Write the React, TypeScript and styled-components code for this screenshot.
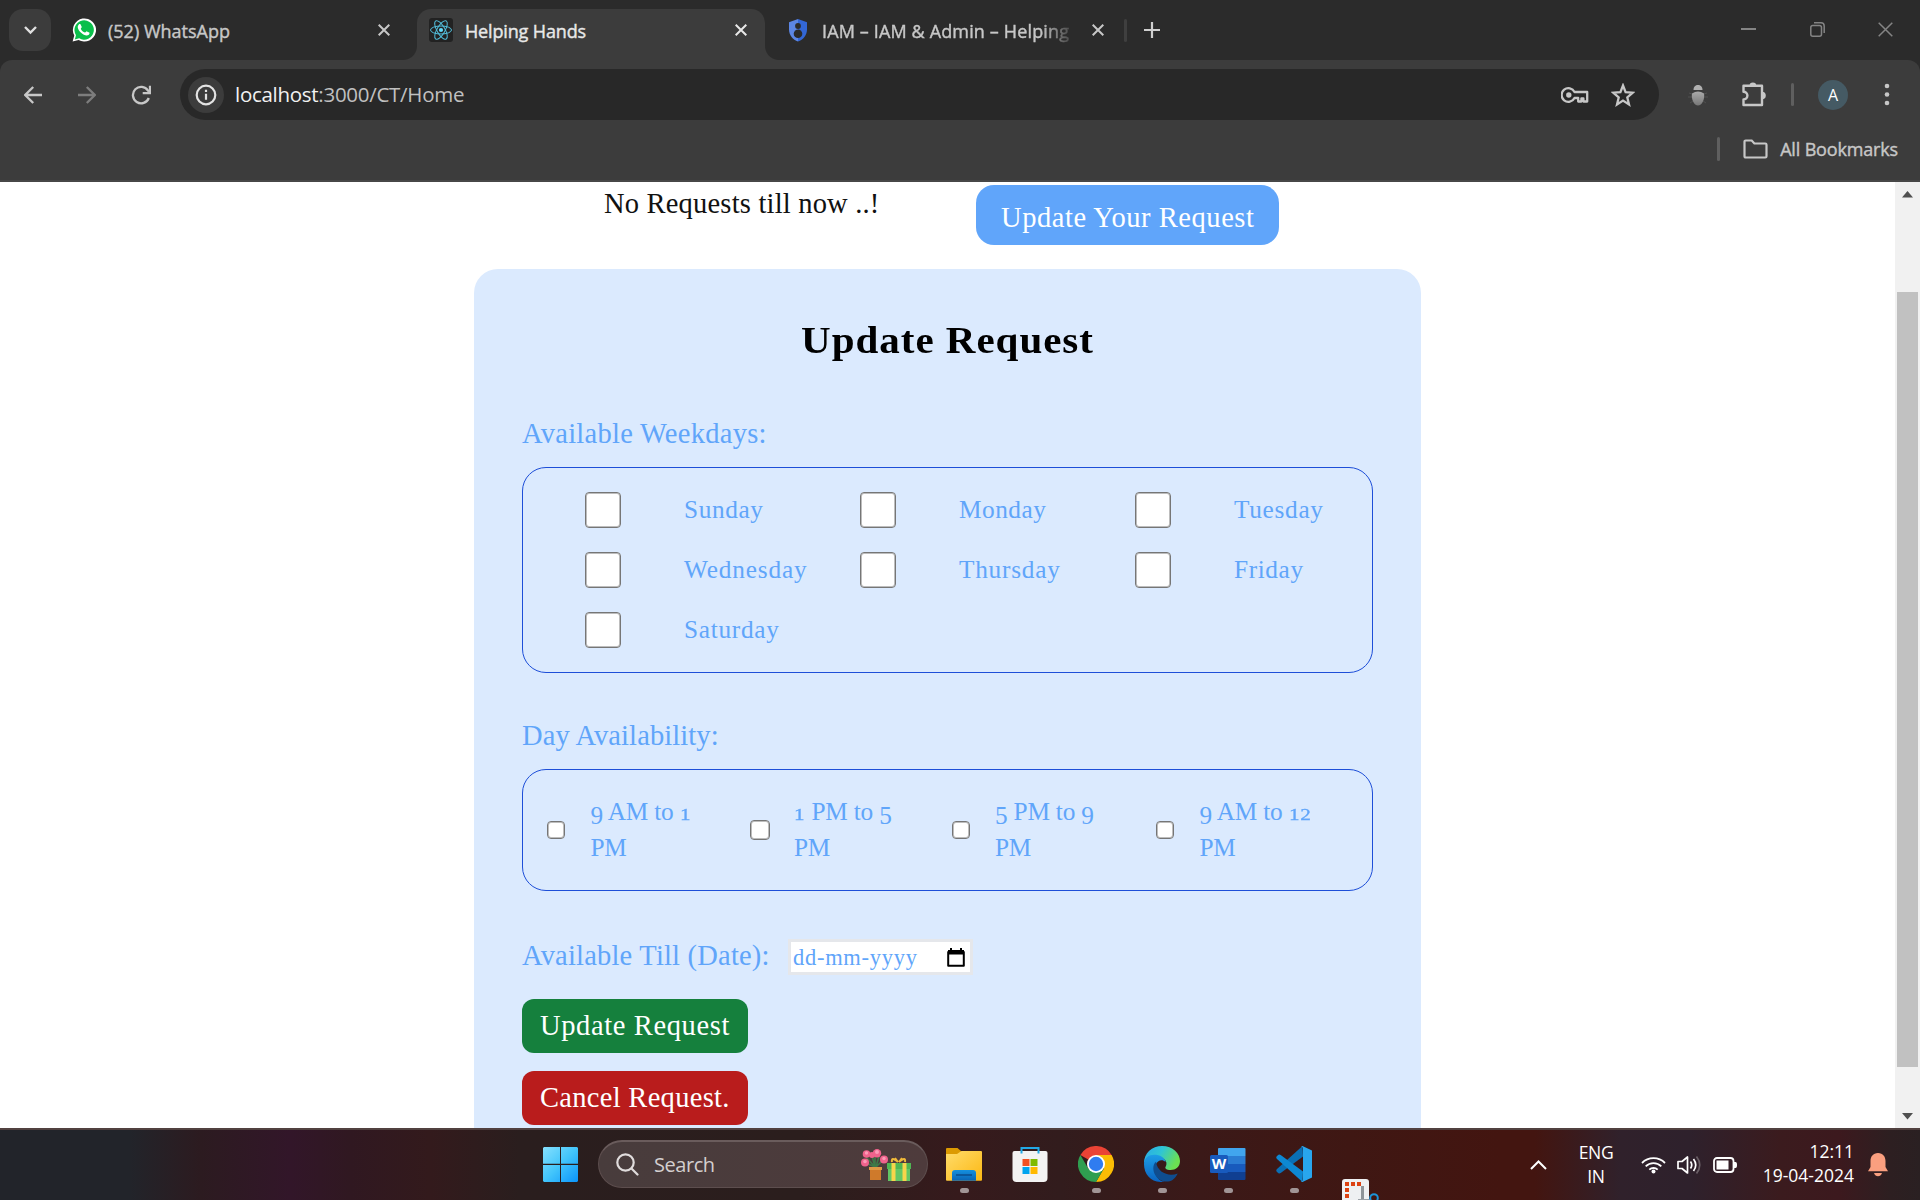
import React from 'react';
import styled, { createGlobalStyle, css } from 'styled-components';

const serif = "'Liberation Serif', serif";
const ui = "'Open Sans', 'Noto Sans', sans-serif";

const Global = createGlobalStyle`
  * { box-sizing: border-box; }
  body { margin: 0; background: #fff; overflow: hidden; }
  svg { display: block; flex: none; }
`;

const Screen = styled.div`
  display: flex;
  flex-direction: column;
  width: 1920px;
  height: 1200px;
  overflow: hidden;
`;

/* ---------- browser chrome ---------- */

const TabStrip = styled.div`
  display: flex;
  height: 60px;
  background: #2b2b2b;
  font-family: ${ui};
`;

const TabSearch = styled.div`
  display: flex;
  align-items: center;
  justify-content: center;
  width: 42px;
  height: 42px;
  margin: 9px 0 0 9px;
  border-radius: 14px;
  background: #3c3c3c;
`;

const Tab = styled.div<{ $active?: boolean; $width: number; $pad: number; $end?: number }>`
  position: relative;
  display: flex;
  align-items: center;
  width: ${p => p.$width}px;
  height: 51px;
  margin-top: 9px;
  padding: 0 ${p => p.$end ?? 17}px 9px ${p => p.$pad}px;
  border-radius: 14px 14px 0 0;
  ${p =>
    p.$active &&
    css`
      background: #3c3c3c;
      &::before,
      &::after {
        content: '';
        position: absolute;
        bottom: 0;
        width: 14px;
        height: 14px;
      }
      &::before {
        left: -14px;
        background: radial-gradient(circle at 0 0, transparent 13.5px, #3c3c3c 14.5px);
      }
      &::after {
        right: -14px;
        background: radial-gradient(circle at 100% 0, transparent 13.5px, #3c3c3c 14.5px);
      }
    `}
`;

const TabTitle = styled.div<{ $active?: boolean; $fade?: boolean; $ls: number; $gap: number }>`
  flex: 1;
  margin-left: ${p => p.$gap}px;
  padding-top: 2px;
  overflow: hidden;
  white-space: nowrap;
  font-size: 18px;
  line-height: 26px;
  letter-spacing: ${p => p.$ls}px;
  color: ${p => (p.$active ? '#e8e8e8' : '#c7c7c7')};
  -webkit-text-stroke: 0.4px currentColor;
  ${p => p.$fade && 'mask-image: linear-gradient(90deg, #000 88%, rgba(0, 0, 0, 0.2) 100%);'}
`;

const NewTab = styled.div`
  display: flex;
  align-items: center;
  gap: 17px;
  height: 60px;
  padding-left: 6px;
`;

const Divider = styled.div<{ $h: number; $w?: number; $color: string }>`
  width: ${p => p.$w ?? 3}px;
  height: ${p => p.$h}px;
  border-radius: 2px;
  background: ${p => p.$color};
`;

const WindowButtons = styled.div`
  display: flex;
  gap: 53.5px;
  margin: 22px 27px 0 auto;
`;

const ToolbarBack = styled.div`
  background: #2b2b2b;
`;

const Toolbar = styled.div`
  height: 122px;
  border-bottom: 2px solid #474747;
  border-radius: 12px 12px 0 0;
  background: #3c3c3c;
  font-family: ${ui};
`;

const NavRow = styled.div`
  display: flex;
  align-items: center;
  height: 69px;
  padding: 0 24px;
`;

const Omnibox = styled.div`
  display: flex;
  align-items: center;
  width: 1479px;
  height: 51px;
  margin-left: 29px;
  padding: 0 24px 0 8px;
  border-radius: 26px;
  background: #282828;
`;

const SiteInfo = styled.div`
  display: flex;
  align-items: center;
  justify-content: center;
  width: 36px;
  height: 36px;
  border-radius: 50%;
  background: #3c3c3c;
`;

const Url = styled.div`
  flex: 1;
  margin: -2px 0 0 11px;
  font-size: 20.5px;
  line-height: 28px;
  letter-spacing: -0.28px;
  color: #c0c0c0;
  b {
    font-weight: 400;
    color: #f1f1f1;
  }
`;

const Avatar = styled.div`
  display: flex;
  align-items: center;
  justify-content: center;
  width: 30px;
  height: 30px;
  border-radius: 50%;
  background: #455a64;
  color: #fff;
  font-size: 16px;
`;

const Spacer = styled.div<{ $w: number }>`
  width: ${p => p.$w}px;
  flex: none;
`;

const BookmarkRow = styled.div`
  display: flex;
  align-items: center;
  justify-content: flex-end;
  height: 42px;
  margin-top: -1px;
  padding-right: 22px;
  color: #c7c7c7;
  font-size: 18px;
  letter-spacing: -0.16px;
  -webkit-text-stroke: 0.4px currentColor;
`;

/* ---------- page ---------- */

const Viewport = styled.div`
  display: flex;
  height: 946px;
  background: #fff;
`;

const Page = styled.main`
  width: 1895px;
  height: 946px;
  overflow: hidden;
  font-family: ${serif};
`;

const TopRow = styled.div`
  display: flex;
  align-items: flex-start;
  height: 87px;
  padding-left: 604px;
`;

const Text = styled.span<{ $ls?: number }>`
  white-space: nowrap;
  letter-spacing: ${p => p.$ls ?? 0}px;
`;

const Empty = styled.div`
  width: 372px;
  padding-top: 2px;
  font-size: 28.5px;
  line-height: 40px;
  color: #111;
`;

const OpenButton = styled.div`
  width: 303px;
  height: 60px;
  margin-top: 3px;
  padding: 12px 0 6px 25px;
  border-radius: 18px;
  background: #60a5fa;
  color: #fff;
  font-size: 28.5px;
  line-height: 42px;
`;

const Card = styled.section`
  width: 947px;
  height: 960px;
  margin-left: 474px;
  padding: 47px 48px 0;
  border-radius: 24px;
  background: #dbeafe;
  color: #60a5fa;
`;

const Heading = styled.h2`
  margin: 0 0 48px;
  text-align: center;
  font-size: 38px;
  line-height: 48px;
  font-weight: 700;
  color: #000;
  transform: scaleX(1.08);
`;

const FieldLabel = styled.div`
  padding-top: 2px;
  font-size: 28.5px;
  line-height: 40px;
`;

const box = css`
  display: grid;
  padding: 24px;
  border: 1px solid #1d4ed8;
  border-radius: 24px;
  font-size: 25.3px;
  line-height: 36px;
`;

const WeekBox = styled.div`
  ${box}
  grid-template-columns: repeat(3, minmax(0, 1fr));
  gap: 24px;
  margin: 13px 0 41px;
`;

const TimeBox = styled.div`
  ${box}
  grid-template-columns: 203px 202px 204px 1fr;
  margin: 13px 0 42px;
`;

const DayItem = styled.div`
  display: flex;
  align-items: center;
  height: 36px;
  padding-left: 38px;
  gap: 63px;
  span {
    margin-top: -2px;
  }
`;

const TimeItem = styled.div<{ $gap: number }>`
  display: flex;
  align-items: center;
  height: 72px;
  gap: ${p => p.$gap}px;
`;

const TimeText = styled.div`
  height: 74px;
  white-space: nowrap;
  letter-spacing: -0.2px;
`;

const Check = styled.div<{ $size: number }>`
  flex: none;
  width: ${p => p.$size}px;
  height: ${p => p.$size}px;
  border: 1px solid #767676;
  border-radius: 4px;
  background: #fff;
  box-shadow: inset 0 0 0 1px #bdbdbd;
`;

/* old-style figures: 1 and 2 sit at x-height, 5 and 9 descend */
const Small = styled.span`
  display: inline-block;
  font-size: 0.7em;
  line-height: 0;
  letter-spacing: 0.6px;
  transform: scaleX(1.2);
  transform-origin: 0 50%;
  -webkit-text-stroke: 0.3px currentColor;
`;

const Low = styled.span`
  line-height: 0;
  vertical-align: -4px;
`;

const DateRow = styled.div`
  display: flex;
  align-items: flex-end;
  margin-bottom: 24px;
`;

const DateLabel = styled(FieldLabel)`
  width: 266px;
  padding-top: 3px;
  line-height: 39px;
`;

const DateInput = styled.div`
  display: flex;
  align-items: center;
  justify-content: space-between;
  width: 185px;
  height: 36px;
  padding: 1px 5px 0 2px;
  border: 3px solid #e5e7eb;
  background: #fff;
  font-size: 22.5px;
`;

const Action = styled.div<{ $color: string }>`
  width: 226px;
  height: 54px;
  margin-bottom: 18px;
  padding: 6px 0 6px 18px;
  border-radius: 12px;
  background: ${p => p.$color};
  color: #fff;
  font-size: 28.5px;
  line-height: 42px;
`;

const Scrollbar = styled.div`
  display: flex;
  flex-direction: column;
  align-items: center;
  width: 25px;
  padding: 9px 0 8px;
  background: #f1f1f1;
`;

const Thumb = styled.div`
  width: 21px;
  height: 775px;
  margin: 94px 0 auto;
  background: #c1c1c1;
`;

/* ---------- taskbar ---------- */

const Taskbar = styled.footer`
  display: flex;
  align-items: flex-start;
  height: 72px;
  padding-left: 543px;
  border-top: 2px solid #514140;
  background: linear-gradient(90deg, #22242a 0, #22242a 130px, #2c1b20 200px, #321629 290px, #301821 350px, #331a1c 430px, #2a1e1e 520px, #2b1e1d 800px, #361a1c 960px, #321c1d 1060px, #3b1918 1200px, #3f1713 1350px, #431510 1500px, #431510 1535px, #30212b 1620px, #2e212c 1690px, #3b1b1e 1780px, #3c191e 1840px, #2d1f21 1890px, #2a2022 1920px);
  font-family: ${ui};
  color: #fff;
`;

const Start = styled.div`
  margin: 17px 20px 0 0;
`;

const SearchPill = styled.div`
  display: flex;
  align-items: center;
  width: 330px;
  height: 48px;
  margin-top: 10px;
  padding: 0 16px 0 17px;
  border: 1px solid #5d4e4e;
  border-top: 2px solid #6a5c5c;
  border-radius: 24px;
  background: linear-gradient(90deg, #483c3c, #4e3b3c);
  color: #d4cfcf;
  font-size: 20px;
  letter-spacing: -0.45px;
`;

const SearchText = styled.div`
  flex: 1;
  margin: -1px 0 0 15px;
`;

const Apps = styled.div`
  display: flex;
  margin-left: 3px;
`;

const AppButton = styled.div<{ $running?: boolean }>`
  display: flex;
  flex-direction: column;
  align-items: center;
  justify-content: space-between;
  width: 66px;
  height: 47px;
  margin-top: 16px;
  &::after {
    content: '';
    width: 9px;
    height: 5px;
    border-radius: 3px;
    background: ${p => (p.$running ? '#a19596' : 'transparent')};
  }
`;

const Rising = styled.div`
  width: 40px;
  height: 22px;
  margin: 48px 0 0 14px;
  overflow: hidden;
`;

const Tray = styled.div`
  display: flex;
  align-items: center;
  height: 70px;
  margin: 0 32px 0 auto;
  font-size: 17.5px;
  line-height: 24px;
`;

const Lang = styled.div`
  width: 60px;
  margin: -2px 15px 0 19px;
  text-align: center;
  letter-spacing: -0.3px;
`;

const Clock = styled.div`
  width: 108px;
  margin: -4px 14px 0 8px;
  text-align: right;
  white-space: nowrap;
`;

const CloseX = ({ color = '#c7c7c7', s = 12, w = 2 }) => (
  <svg width={s} height={s} viewBox={`0 0 ${s} ${s}`} stroke={color} strokeWidth={w}>
    <path d={`M.7.7L${s - 0.7} ${s - 0.7}M${s - 0.7} .7L.7 ${s - 0.7}`} />
  </svg>
);

const WhatsApp = () => (
  <svg width="24" height="24" viewBox="0 0 24 24">
    <path d="M.6 23.6l1.7-6A11.6 11.6 0 1 1 6.6 22z" fill="#fff" />
    <path d="M2.8 21.4l1.2-4.2A9.7 9.7 0 1 1 7.2 20.3z" fill="#0abf4b" />
    <path d="M8.6 6.4c-.3-.6-1.3-.6-1.8 0-2.1 2.300-.8 5.200 2 8 2.900 2.900 6.200 3.900 8 2.300.9-.9.9-1.900.4-2.200l-2.300-1.100c-.9-.3-1.200 1.400-2 1.200-1.700-.6-3.300-2.100-4-3.700-.2-.7 1.100-1.200.8-2.100z" fill="#fff" />
  </svg>
);

const ReactLogo = () => (
  <svg width="24" height="24" viewBox="0 0 24 24">
    <rect width="24" height="24" rx="3" fill="#222" />
    <g fill="none" stroke="#53c1de" strokeWidth="1">
      <ellipse cx="12" cy="12" rx="10.500" ry="4" />
      <ellipse cx="12" cy="12" rx="10.500" ry="4" transform="rotate(60 12 12)" />
      <ellipse cx="12" cy="12" rx="10.500" ry="4" transform="rotate(120 12 12)" />
    </g>
    <circle cx="12" cy="12" r="2.100" fill="#61dafb" />
  </svg>
);

const Shield = () => (
  <svg width="18" height="23" viewBox="0 0 18 23">
    <path d="M9 0L0 3.300v7.200C0 16 3.800 21 9 22.500z" fill="#5c86e4" />
    <path d="M9 0l9 3.300v7.200C18 16 14.200 21 9 22.500z" fill="#3367d6" />
    <circle cx="9" cy="7" r="2.900" fill="#2b2b2b" />
    <circle cx="9" cy="14.800" r="4.300" fill="#2b2b2b" />
  </svg>
);

const Arrow = ({ color, flip }: { color: string; flip?: boolean }) => (
  <svg width="18" height="18" viewBox="0 0 18 18" fill="none" stroke={color} strokeWidth="2.300">
    <path d={flip ? 'M0 9h16.500M8.800 1l8 8-8 8' : 'M18 9H1.500M9.200 1l-8 8 8 8'} />
  </svg>
);

const Reload = () => (
  <svg width="20" height="20" viewBox="0 0 20 20" fill="none" stroke="#c7c7c7" strokeWidth="2.300">
    <path d="M17.800 13A8.200 8.200 0 1 1 17 5.600l1 1.200" />
    <path d="M19 .8v7.300h-7.300" />
  </svg>
);

const Key = () => (
  <svg width="28" height="18" viewBox="0 0 28 18">
    <path d="M13.500 6A6.800 6.800 0 1 0 13.500 12h3.700v3.500h3.200V12.500h2v3h3.800V6z" fill="none" stroke="#c7c7c7" strokeWidth="2.300" strokeLinejoin="round" />
    <circle cx="7.800" cy="9" r="2.700" fill="#c7c7c7" />
  </svg>
);

const Star = () => (
  <svg width="24" height="24" viewBox="0 0 24 24" fill="none" stroke="#c7c7c7" strokeWidth="2.300">
    <path d="M12 2.500l2.600 6.600 7.100.6-5.400 4.700 1.700 7L12 17.600l-6 3.800 1.700-7L2.300 9.700l7.100-.6z" />
  </svg>
);

const Bug = () => (
  <svg width="20" height="22" viewBox="0 0 20 22">
    <defs>
      <linearGradient id="bug" x1="0" y1="0" x2="0" y2="1">
        <stop offset="0" stopColor="#aaa" />
        <stop offset="1" stopColor="#777" />
      </linearGradient>
    </defs>
    <path d="M1 9l3 1M19 9l-3 1M0 13h4M20 13h-4M2 19l3-2M18 19l-3-2" stroke="#505050" />
    <path d="M5.500 6C5.500 2.500 7.500 1 10 1s4.500 1.500 4.500 5z" fill="#b0b0b0" />
    <path d="M4 9.500Q10 5.500 16 9.500C17 15 14 21.500 10 21.500S3 15 4 9.500z" fill="url(#bug)" />
  </svg>
);

const Puzzle = () => (
  <svg width="26" height="26" viewBox="0 0 26 26">
    <path d="M2.500 3.800h18.500v19.200h-18.500v-5.500a3.900 3.900 0 0 0 0-7.800z" fill="none" stroke="#c7c7c7" strokeWidth="2.400" strokeLinejoin="round" />
    <path d="M8.500 3.800a3.400 3.400 0 0 1 6.800 0zM21 9.800a3.800 3.800 0 0 1 0 7.600z" fill="#c7c7c7" />
  </svg>
);

const Folder = () => (
  <svg width="25" height="20" viewBox="0 0 25 20">
    <path d="M1.500 2.700q0-1.200 1.200-1.200h6l2.700 3h10.900q1.200 0 1.200 1.200v11.600q0 1.200-1.200 1.200H2.700q-1.200 0-1.200-1.200z" fill="none" stroke="#c7c7c7" strokeWidth="2.200" />
  </svg>
);

const Calendar = () => (
  <svg width="18" height="20" viewBox="0 0 18 20">
    <path d="M1.200 4h15.600v13.800H1.200z" fill="none" stroke="#000" strokeWidth="2" strokeLinejoin="round" />
    <path d="M1 2h16v4.500H1zM3 0h2v3H3zM13 0h2v3h-2z" />
  </svg>
);

const Windows = () => (
  <svg width="35" height="35" viewBox="0 0 35 35">
    <defs>
      <linearGradient id="win" x1="0" y1="0" x2="1" y2="1">
        <stop offset="0" stopColor="#86e0fd" />
        <stop offset=".5" stopColor="#42c5fb" />
        <stop offset="1" stopColor="#0a94fb" />
      </linearGradient>
    </defs>
    <path d="M1 0h16v16.800H0V1zM18 0h16l1 1v15.800H18zM0 18h17v17H1l-1-1zM18 18h17v16l-1 1H18z" fill="url(#win)" />
  </svg>
);

const Flowers = () => (
  <svg width="50" height="32" viewBox="0 0 50 32">
    <path d="M14 18L5 8M14 18V6M15 18l8-8M14 18L5 14M14 18l-3-11M15 18l3-11" stroke="#3e7a48" strokeWidth="1.600" />
    <g fill="#f0628c">
      <circle cx="5.500" cy="5" r="3.800" /><circle cx="16" cy="4.200" r="4.200" /><circle cx="4" cy="13.500" r="4" />
      <circle cx="23" cy="10.500" r="4" /><circle cx="11" cy="6" r="3" />
    </g>
    <g fill="#fb9bb6">
      <circle cx="5.500" cy="4" r="1.700" /><circle cx="16" cy="3" r="2" /><circle cx="4" cy="12.500" r="1.800" /><circle cx="23" cy="9.500" r="1.700" />
    </g>
    <path d="M8 18h13v3h-1v10H9V21H8z" fill="#cf7a2b" />
    <path d="M8 18h13v3H8z" fill="#e09a45" />
    <path d="M26 14h24v6H26z" fill="#4fb653" />
    <path d="M27 20h22v12H27z" fill="#62c665" />
    <path d="M30.500 14h4v18h-4zM41.500 14h4v18h-4z" fill="#f6d54b" />
    <path d="M37 13q-7-6-6 0M38 13q7-6 6 0M37 13l-3-4M38 13l3-4" fill="none" stroke="#f0b93a" strokeWidth="2" />
  </svg>
);

const Explorer = () => (
  <svg width="36" height="36" viewBox="0 0 36 36">
    <defs>
      <linearGradient id="fo" x1="0" y1="0" x2="1" y2="1">
        <stop offset="0" stopColor="#ffdc6b" /><stop offset="1" stopColor="#fcb813" />
      </linearGradient>
      <linearGradient id="fb" x1="0" y1="0" x2="0" y2="1">
        <stop offset="0" stopColor="#1490df" /><stop offset="1" stopColor="#0a64b4" />
      </linearGradient>
    </defs>
    <path d="M0 3q0-1 1-1h10.500l4 3.500-4 4H0z" fill="#dc9a02" />
    <path d="M0 8h11l4.500-3H35q1 0 1 1v28q0 .8-1 .8H1q-1 0-1-.8z" fill="url(#fo)" />
    <path d="M6 34.800V27q0-3 3-3h18q3 0 3 3v7.800z" fill="url(#fb)" />
    <path d="M10 29h16" stroke="#0a4f90" strokeWidth="1.600" />
  </svg>
);

const Store = () => (
  <svg width="36" height="36" viewBox="0 0 36 36">
    <path d="M.5 7q0-2 2-2h31q2 0 2 2v25q0 4-4 4h-27q-4 0-4-4z" fill="#f3f3f3" />
    <path d="M9.500 7.500V2h17v5.500" fill="none" stroke="#22a9e6" strokeWidth="2" />
    <path d="M10.500 13h7v7h-7z" fill="#f25022" /><path d="M18.500 13h7v7h-7z" fill="#7fba00" />
    <path d="M10.500 21h7v7h-7z" fill="#00a4ef" /><path d="M18.500 21h7v7h-7z" fill="#ffb900" />
  </svg>
);

const Chrome = () => (
  <svg width="36" height="36" viewBox="0 0 36 36">
    <path d="M18 18L2.400 9A18 18 0 0 1 33.600 9z" fill="#ea4335" />
    <path d="M18 9h15.600A18 18 0 0 1 18 36l7.800-13.500z" fill="#fbbc04" />
    <path d="M10.200 22.500L2.400 9A18 18 0 0 0 18 36l7.800-13.500z" fill="#2f9e50" />
    <circle cx="18" cy="18" r="9" fill="#fff" /><circle cx="18" cy="18" r="7.200" fill="#2f7cf0" />
  </svg>
);

const Edge = () => (
  <svg width="36" height="36" viewBox="0 0 36 36">
    <defs>
      <linearGradient id="ea" x1="0" y1="0" x2="1" y2=".4">
        <stop offset="0" stopColor="#2aa8ea" /><stop offset=".5" stopColor="#2fc5d4" /><stop offset="1" stopColor="#6be052" />
      </linearGradient>
      <linearGradient id="eb" x1="0" y1="0" x2="0" y2="1">
        <stop offset="0" stopColor="#1d9de6" /><stop offset="1" stopColor="#0a63c0" />
      </linearGradient>
    </defs>
    <path d="M0 17C0 7 8 0 18 0c11 0 18 7.500 18 15 0 6-4.500 9-9.500 9-4 0-5.800-1.600-5-3 2-3 1.500-9-6.500-9S1 15 0 17z" fill="url(#ea)" />
    <path d="M0 18C0 12 5 8.800 10 8.800c6 0 11 2.700 11.500 7.200-3-3-8-2-10 3-2.500 7 2 16 9 16.800C8 37.500 0 29 0 18z" fill="url(#eb)" />
    <path d="M12 15.800c-3.500 3-3.500 9-.5 13.700 4 6.300 12 7.500 17 4.500 2.600-1.700 4-4 5.200-6.500C25 31 13.500 27 12 15.800z" fill="#0f4d8f" />
  </svg>
);

const WordLetter = styled.text`
  font: 700 15px ${ui};
`;

const Word = () => (
  <svg width="36" height="36" viewBox="0 0 36 36">
    <path d="M8 3q0-1 1-1h25.500q1 0 1 1v7H8z" fill="#41a5ee" />
    <path d="M8 10h27.500v8H8z" fill="#2b7cd3" /><path d="M8 18h27.500v8H8z" fill="#185abd" />
    <path d="M8 26h27.500v7q0 1-1 1H9q-1 0-1-1z" fill="#103f91" />
    <rect y="9" width="18" height="18" rx="1.500" fill="#185abd" />
    <WordLetter x="9" y="23" textAnchor="middle" fill="#fff">W</WordLetter>
  </svg>
);

const VSCode = () => (
  <svg width="36" height="36" viewBox="0 0 36 36">
    <path d="M26.500 0L1 23q-1.500 1.500 0 3l1.500 1.200q1 .6 2.200-.2L27 10.500z" fill="#0a6fb5" />
    <path d="M26.500 36L1 13q-1.500-1.500 0-3l1.500-1.200q1-.6 2.200.2L27 25.500z" fill="#0d88d3" />
    <path d="M26.500 0L36 4.500v27L26.500 36q-1 .2-1.500-.5 2 0 2-2v-31q0-2-2-2z" fill="#28a6ee" />
  </svg>
);

const Snip = () => (
  <svg width="40" height="36" viewBox="0 0 40 36">
    <rect x="1" y="1" width="27" height="34" rx="3" fill="#eef0f2" />
    <path d="M4 4h4v4H4zM10 4h4v4h-4zM16 4h4v4h-4zM4 10h4v4H4zM4 16h4v4H4z" fill="#dc4212" />
    <path d="M20 8h3v14h-3z" fill="#8e9499" />
    <path d="M17 22h12" stroke="#9aa0a6" strokeWidth="2" />
    <circle cx="33" cy="20" r="3.800" fill="none" stroke="#1c93d8" strokeWidth="2" />
  </svg>
);

const Wifi = () => (
  <svg width="25" height="18" viewBox="0 0 25 18" fill="none" stroke="#fff" strokeWidth="1.800">
    <path d="M1 7a16.200 16.200 0 0 1 23 0M4.700 10.400a11 11 0 0 1 15.600 0M8.300 13.700a6 6 0 0 1 8.400 0" />
    <circle cx="12.500" cy="15.500" r="2" fill="#fff" stroke="none" />
  </svg>
);

const Volume = () => (
  <svg width="25" height="20" viewBox="0 0 25 20" fill="none" stroke="#fff" strokeWidth="1.700">
    <path d="M1 6.500h4L10.500 2v16L5 13.500H1z" strokeLinejoin="round" />
    <path d="M13.500 6.500q2.500 3.500 0 7M16.500 4q4.500 6 0 12" />
    <path d="M19.500 1.500q6.500 8.500 0 17" stroke="#6a5f66" />
  </svg>
);

const Battery = () => (
  <svg width="25" height="16" viewBox="0 0 25 16">
    <rect x="1" y="1" width="19.500" height="14" rx="3" fill="none" stroke="#fff" strokeWidth="1.800" />
    <rect x="3.500" y="3.500" width="12" height="9" fill="#fff" />
    <path d="M21 5h1.500q1.500 0 1.500 3t-1.500 3H21z" fill="#fff" />
  </svg>
);

const Bell = () => (
  <svg width="20" height="24" viewBox="0 0 20 24" fill="#fa9f7f">
    <path d="M10 0c5 0 7.500 3.700 7.500 8v6l2.500 4.300H0L2.500 14V8C2.500 3.700 5 0 10 0zM6 20h8q-1.200 3.300-4 3.300T6 20z" />
  </svg>
);

const days: [string, number][] = [
  ['Sunday', 0.6],
  ['Monday', 0.5],
  ['Tuesday', 0.7],
  ['Wednesday', 0.85],
  ['Thursday', 0.75],
  ['Friday', 0.6],
  ['Saturday', 0.7],
];

export default function App() {
  return (
    <Screen>
      <Global />
      <TabStrip>
        <TabSearch>
          <svg width="13" height="9" viewBox="0 0 13 9" fill="none" stroke="#e0e0e0" strokeWidth="2.400"><path d="M1 1l5.500 5.500L12 1" /></svg>
        </TabSearch>
        <Tab $width={366} $pad={21} $end={27}>
          <WhatsApp />
          <TabTitle $gap={12} $ls={0}>(52) WhatsApp</TabTitle>
          <CloseX />
        </Tab>
        <Tab $active $width={348} $pad={12} $end={18}>
          <ReactLogo />
          <TabTitle $active $gap={12} $ls={-0.15}>Helping Hands</TabTitle>
          <CloseX color="#e8e8e8" />
        </Tab>
        <Tab $width={353} $pad={24} $end={14}>
          <Shield />
          <TabTitle $fade $gap={15} $ls={0.14}>IAM – IAM &amp; Admin – Helping</TabTitle>
          <Spacer $w={22} />
          <CloseX />
        </Tab>
        <NewTab>
          <Divider $h={23} $color="#3f3f3f" />
          <svg width="16" height="16" viewBox="0 0 16 16" stroke="#d0d0d0" strokeWidth="2.200"><path d="M0 8h16M8 0v16" /></svg>
        </NewTab>
        <WindowButtons>
          <svg width="15" height="15" viewBox="0 0 15 15" stroke="#848484" strokeWidth="2"><path d="M0 7h15" /></svg>
          <svg width="15" height="15" viewBox="0 0 15 15" fill="none" stroke="#848484" strokeWidth="1.500">
            <rect x=".8" y="3.500" width="10.700" height="10.700" rx="2" />
            <path d="M4 .8h7q3.200 0 3.200 3.200v7" />
          </svg>
          <CloseX color="#848484" s={15} w={1.5} />
        </WindowButtons>
      </TabStrip>

      <ToolbarBack>
        <Toolbar>
          <NavRow>
            <Arrow color="#c7c7c7" />
            <Spacer $w={36} />
            <Arrow color="#7d7d7d" flip />
            <Spacer $w={35} />
            <Reload />
            <Omnibox>
              <SiteInfo>
                <svg width="22" height="22" viewBox="0 0 22 22" fill="none" stroke="#e3e3e3" strokeWidth="2.200">
                  <circle cx="11" cy="11" r="9.300" /><path d="M11 9.800v6M11 5.800v2.200" />
                </svg>
              </SiteInfo>
              <Url><b>localhost</b>:3000/CT/Home</Url>
              <Key />
              <Spacer $w={22} />
              <Star />
            </Omnibox>
            <Spacer $w={29} />
            <Bug />
            <Spacer $w={33} />
            <Puzzle />
            <Spacer $w={24} />
            <Divider $h={23} $color="#5f5f5f" />
            <Spacer $w={24} />
            <Avatar>A</Avatar>
            <Spacer $w={36} />
            <svg width="6" height="24" viewBox="0 0 6 24" fill="#c7c7c7"><circle cx="3" cy="3" r="2.300" /><circle cx="3" cy="11.500" r="2.300" /><circle cx="3" cy="20" r="2.300" /></svg>
          </NavRow>
          <BookmarkRow>
            <Divider $h={24} $color="#5f5f5f" />
            <Spacer $w={23} />
            <Folder />
            <Spacer $w={12} />
            All Bookmarks
          </BookmarkRow>
        </Toolbar>
      </ToolbarBack>

      <Viewport>
        <Page>
          <TopRow>
            <Empty><Text $ls={0.2}>No Requests till now ..!</Text></Empty>
            <OpenButton><Text $ls={0.55}>Update Your Request</Text></OpenButton>
          </TopRow>
          <Card>
            <Heading><Text $ls={0.9}>Update Request</Text></Heading>
            <FieldLabel><Text $ls={0.27}>Available Weekdays:</Text></FieldLabel>
            <WeekBox>
              {days.map(([day, ls]) => (
                <DayItem key={day}><Check $size={36} /><Text $ls={ls}>{day}</Text></DayItem>
              ))}
            </WeekBox>
            <FieldLabel><Text $ls={0.1}>Day Availability:</Text></FieldLabel>
            <TimeBox>
              <TimeItem $gap={25.5}><Check $size={18} /><TimeText><Low>9</Low> AM to <Small>1</Small><br />PM</TimeText></TimeItem>
              <TimeItem $gap={24}><Check $size={20} /><TimeText><Small>1</Small> &#8202;PM to <Low>5</Low><br />PM</TimeText></TimeItem>
              <TimeItem $gap={25}><Check $size={18} /><TimeText><Low>5</Low> PM to <Low>9</Low><br />PM</TimeText></TimeItem>
              <TimeItem $gap={25.5}><Check $size={18} /><TimeText><Low>9</Low> AM to <Small>12</Small><br />PM</TimeText></TimeItem>
            </TimeBox>
            <DateRow>
              <DateLabel><Text $ls={0.2}>Available Till (Date):</Text></DateLabel>
              <DateInput><Text $ls={0.72}>dd-mm-yyyy</Text><Calendar /></DateInput>
            </DateRow>
            <Action $color="#15803d"><Text $ls={0.62}>Update Request</Text></Action>
            <Action $color="#b91c1c"><Text $ls={0.3}>Cancel Request.</Text></Action>
          </Card>
        </Page>
        <Scrollbar>
          <svg width="11" height="7" viewBox="0 0 11 7" fill="#505050"><path d="M0 6.500L5.500 0 11 6.500z" /></svg>
          <Thumb />
          <svg width="11" height="7" viewBox="0 0 11 7" fill="#505050"><path d="M0 0h11L5.500 6.500z" /></svg>
        </Scrollbar>
      </Viewport>

      <Taskbar>
        <Start><Windows /></Start>
        <SearchPill>
          <svg width="23" height="23" viewBox="0 0 23 23" fill="none" stroke="#e0dcdc" strokeWidth="2.200" strokeLinecap="round"><circle cx="9.500" cy="9.500" r="8.200" /><path d="M15.500 15.500l6 6" /></svg>
          <SearchText>Search</SearchText>
          <Flowers />
        </SearchPill>
        <Apps>
          <AppButton $running><Explorer /></AppButton>
          <AppButton><Store /></AppButton>
          <AppButton $running><Chrome /></AppButton>
          <AppButton $running><Edge /></AppButton>
          <AppButton $running><Word /></AppButton>
          <AppButton $running><VSCode /></AppButton>
          <Rising><Snip /></Rising>
        </Apps>
        <Tray>
          <svg width="17" height="10" viewBox="0 0 17 10" fill="none" stroke="#fff" strokeWidth="2"><path d="M1 9l7.500-7.500L16 9" /></svg>
          <Lang>ENG<br />IN</Lang>
          <Wifi />
          <Spacer $w={11} />
          <Volume />
          <Spacer $w={11} />
          <Battery />
          <Clock>12:11<br />19-04-2024</Clock>
          <Bell />
        </Tray>
      </Taskbar>
    </Screen>
  );
}
